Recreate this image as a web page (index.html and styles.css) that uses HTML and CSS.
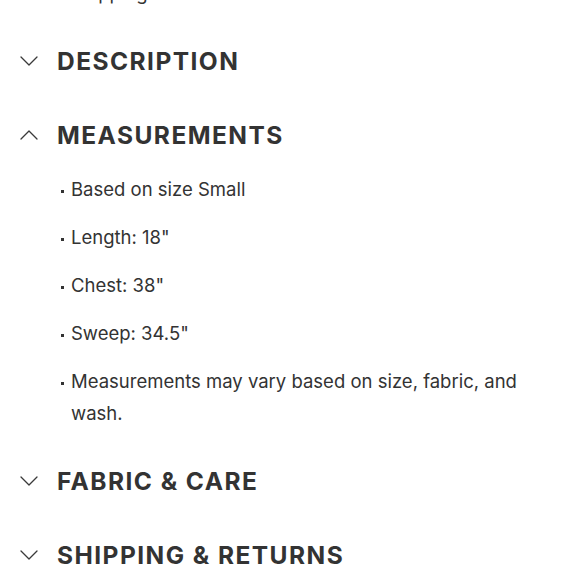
FILE: index.html
```html
<!DOCTYPE html>
<html lang="en">
<head>
<meta charset="utf-8">
<title>Product details</title>
<link rel="stylesheet" href="styles.css">
</head>
<body>
  <div class="intro">Shipping</div>

  <section class="acc">
    <div class="acc-head">
      <svg class="chev" viewBox="0 0 18 10" width="18" height="10"><path d="M1 1 L9 9 L17 1" /></svg>
      <h2 class="acc-title">DESCRIPTION</h2>
    </div>
  </section>

  <section class="acc open">
    <div class="acc-head">
      <svg class="chev" viewBox="0 0 18 10" width="18" height="10"><path d="M1 9 L9 1 L17 9" /></svg>
      <h2 class="acc-title">MEASUREMENTS</h2>
    </div>
    <ul class="acc-list">
      <li>Based on size Small</li>
      <li>Length: 18"</li>
      <li>Chest: 38"</li>
      <li>Sweep: 34.5"</li>
      <li>Measurements may vary based on size, fabric, and wash.</li>
    </ul>
  </section>

  <section class="acc">
    <div class="acc-head">
      <svg class="chev" viewBox="0 0 18 10" width="18" height="10"><path d="M1 1 L9 9 L17 1" /></svg>
      <h2 class="acc-title">FABRIC &amp; CARE</h2>
    </div>
  </section>

  <section class="acc">
    <div class="acc-head">
      <svg class="chev" viewBox="0 0 18 10" width="18" height="10"><path d="M1 1 L9 9 L17 1" /></svg>
      <h2 class="acc-title">SHIPPING &amp; RETURNS</h2>
    </div>
  </section>
</body>
</html>
```
FILE: styles.css
```css
html, body {
  margin: 0;
  padding: 0;
  background: #ffffff;
  overflow: hidden;
}
body {
  width: 580px;
  height: 580px;
  font-family: Inter, "Liberation Sans", sans-serif;
  color: #333333;
}
.intro {
  margin-top: -23px;
  margin-bottom: 15px;
  padding-left: 71px;
  font-size: 18.5px;
  line-height: 32px;
  height: 32px;
}
.acc-head {
  display: flex;
  align-items: center;
  height: 74px;
  padding-left: 20px;
  gap: 19px;
}
.chev {
  flex: none;
  fill: none;
  stroke: #3a3a3a;
  stroke-width: 1.3;
  stroke-linecap: round;
  stroke-linejoin: round;
}
.acc-title {
  margin: 0;
  font-size: 24.5px;
  font-weight: 700;
  letter-spacing: 1.45px;
  line-height: 30px;
  color: #333333;
}
.acc-list {
  list-style: none;
  margin: 0;
  padding: 1px 40px 15px 0;
  display: flex;
  flex-direction: column;
  gap: 16px;
}
.acc-list li {
  display: flex;
  font-size: 18.5px;
  line-height: 32px;
  color: #333333;
}
.acc-list li::before {
  content: "";
  flex: none;
  width: 3px;
  height: 3px;
  margin: 17px 7px 0 61px;
  background: #333333;
}
```
